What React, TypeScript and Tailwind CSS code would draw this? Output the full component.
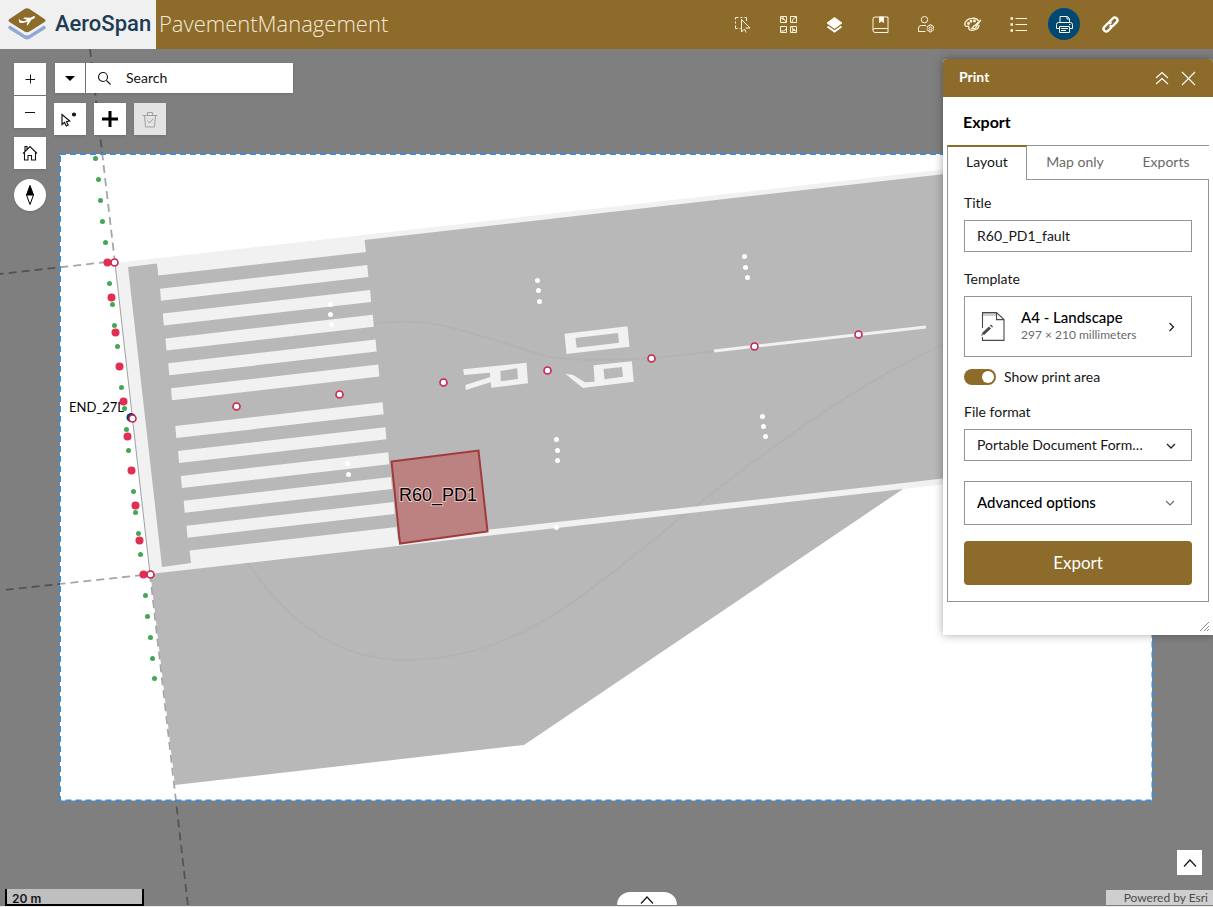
import React from "react";

const GREEN_LIGHTS = [
    [95, 158], [98, 179], [100, 200], [102, 221], [105, 242], [109, 283], [112, 304], [114, 325],
    [117, 346], [121, 387], [124, 408], [126, 429], [128, 450], [133, 491], [135, 512], [138, 533],
    [140, 554], [145, 595], [147, 616], [150, 637], [152, 658], [154, 678],
];

const RED_LIGHTS = [
    [107, 262], [111, 297], [115, 332], [119, 366], [123, 401], [127, 436], [131, 470], [135, 505],
    [139, 540], [143, 574],
];

const RING_LIGHTS = [
    [114, 262], [132, 418], [150, 574], [236, 406], [339, 394], [443, 382], [547, 370], [651, 358],
    [754, 346], [858, 334],
];

const WHITE_LIGHTS = [
    [537, 280], [538, 290], [539, 301], [744, 256], [745, 267], [747, 277], [762, 416], [763, 426],
    [765, 436], [556, 439], [557, 450], [557, 460], [556, 527], [330, 304], [330, 314], [331, 324],
    [347, 463], [348, 474],
];

// top left corner of every threshold stripe
const STRIPES = [
    [160, 288.7], [162.8, 313.6], [165.5, 338.4], [168.3, 363.3], [171, 388.3],
    [175.3, 426], [178.1, 451], [180.9, 475.9], [183.7, 500.7], [186.5, 525.7],
];

export default function App() {
    return (
        <div className="flex min-h-screen flex-col border-b border-[#ececec] bg-white font-[Lato,sans-serif] text-[#151515]">
            <TopBar />
            <main className="relative flex-1 overflow-hidden bg-[#7f7f7f]">
                <RunwayMap />
                <div className="absolute left-3.5 top-3.5 flex items-start gap-2">
                    <NavigationControls />
                    <SearchControls />
                </div>
                <PrintPanel />
                <div className="absolute bottom-0 left-[5px] h-[17px] w-[139px] border-2 border-t-0 border-black bg-[#bfbfbf] pl-[5px] font-[Inter,sans-serif] text-xs font-semibold leading-5">
                    20 m
                </div>
                <button
                    aria-label="Open attribute table"
                    className="absolute bottom-px left-1/2 ml-2.5 flex h-[13px] w-[60px] justify-center rounded-t-[14px] bg-white pt-1"
                >
                    <svg width="14" height="8" viewBox="0 0 14 8" fill="none" stroke="#151515" strokeWidth="1.2">
                        <path d="M1 7.500 7 1l6 6.500" />
                    </svg>
                </button>
                <button
                    aria-label="Expand"
                    className="absolute bottom-[31px] right-[11px] flex h-[25px] w-[25px] items-center justify-center bg-white"
                >
                    <svg width="14" height="8" viewBox="0 0 14 8" fill="none" stroke="#151515" strokeWidth="1.2">
                        <path d="M1 7.500 7 1l6 6.500" />
                    </svg>
                </button>
                <div className="absolute bottom-px right-0 bg-[#cfcfcf] pl-[18px] pr-[5px] text-xs leading-[15px] text-[#4c4c4c]">
                    Powered by <a href="#esri">Esri</a>
                </div>
            </main>
        </div>
    );
}

function TopBar() {
    return (
        <header className="flex h-[49px] items-center bg-[#8c6b2b]">
            <div className="flex h-full w-[156px] items-center gap-2 bg-[#f0f0f0] pb-0.5 pl-2">
                <svg width="38" height="32" viewBox="0 0 38 32" className="shrink-0">
                    <path
                        d="M2 17.500.8 18.500q-1.500 1.300.5 2.800L16.500 30.700q2.500 1.600 5 0L36.700 21.300q2-1.500.5-2.800L36 17.500 21.500 26.700q-2.500 1.500-5 0z"
                        fill="#8fa9d3"
                    />
                    <path
                        d="M16.500 1q2.500-1.500 5 0L36.500 11q2 1.500 0 3L21.500 23.500q-2.500 1.600-5 0L1.500 14q-2-1.500 0-3z"
                        fill="#8c6b2b"
                    />
                    <path
                        d="M27 8.500c-1.200-.5-3 .4-4.400 1.300l-6.300-.3-1.100.9 3.700 1.300-2.500 1.500-3.900-.6-1-1.400-.9.300.7 2-.4 1.100 1.400.2c2.900.6 5.300-.3 7.300-1.300l-1 4 1.200-.2 3.600-5.500c2-1 4.400-2.100 3.600-3.300z"
                        fill="#fff"
                    />
                </svg>
                <span className="pl-px font-[Roboto,sans-serif] text-[22px] font-medium text-[#1c3b55]">AeroSpan</span>
            </div>
            <h1 className="pb-0.5 pl-[3px] font-['Open_Sans',sans-serif] text-[22px] font-light text-[#f7e8d5]">
                PavementManagement
            </h1>
            <nav className="ml-auto flex gap-3.5 pb-px pr-[87px] text-[#fff3dc]">
                <ToolButton label="Select">
                    <path d="M12.500 5V1.500h-2m-2 0h-2m-2 0h-3v2m0 2v2m0 2v3h2m2 0h1" />
                    <path d="M7.500 3.500v12.500l3-3 1.700 3.500 M7.500 3.500l8.500 8.500h-4.500" />
                </ToolButton>
                <ToolButton label="Basemap gallery">
                    <path d="M.5.500h6v6h-6zM10.500.500h6v6h-6zM.5 10.500h6v6h-6zM10.500 10.500h6v6h-6zM1 2l3 1 2 3M3 1v3M12 6q0-3 4-5M1 15q4 1 5-2M12 11l1 3 3 1m-4 1 1-2 2-1" />
                </ToolButton>
                <ToolButton label="Layers">
                    <path d="M8.500 1.500 16 7l-7.500 5.500L1 7z" fill="#fff" />
                    <path d="m1.500 10.500 7 5 7-5" stroke="#fff" strokeWidth="2" />
                </ToolButton>
                <ToolButton label="Bookmarks">
                    <path d="M3 1h13v15.500H3q-2 0-2-2V3q0-2 2-2zM1 14q0-1.500 2-1.500h13" />
                    <path d="M7.500 1v5.500L9.500 5l2 1.500V1z" fill="#fff" />
                </ToolButton>
                <ToolButton label="User settings">
                    <circle cx="6.500" cy="3.700" r="3.200" />
                    <path d="M7.500 15.500h-7V12q0-2.500 3-2.500H8" />
                    <circle cx="12.500" cy="12.500" r="1.400" />
                    <path d="m11.700 8.800 1.600 0 .3 1.200 1.200-.3.900 1.400-.9.900.9 1.500-1 1.300-1.200-.2-.4 1.400h-1.500l-.4-1.300-1.200.2-.9-1.400.8-1-.8-1.200 1-1.500 1.200.3z" />
                </ToolButton>
                <ToolButton label="Styles">
                    <g strokeWidth="1.300">
                        <path d="M14.500 5C13.500 3 11 2 8 2.300 4 2.600.8 5 .8 8.200c0 1.900 1.500 2.300 2.700 2 1.500-.3 1.500.6 1.300 1.800-.2 1.800 1.700 2.500 4.200 2.200 3.500-.4 6-2.400 6.100-5.100" />
                        <path d="M16.800 4 11 9.500c-1.700-.2-1.500 2-3 2.700 2 .7 3.800.4 4.200-1.400z" />
                        <circle cx="4.500" cy="7.500" r=".8" />
                        <circle cx="7" cy="5.300" r=".8" />
                        <circle cx="10.500" cy="5" r=".8" />
                    </g>
                </ToolButton>
                <ToolButton label="Legend">
                    <path d="M5.500 2.500H17M5.500 8.500H17M5.500 14.500H17" />
                    <path d="M.5 2.500h2.500M.5 8.500h2.500M.5 14.500h2.500" strokeWidth="2.400" />
                </ToolButton>
                <ToolButton label="Print" active>
                    <path d="M4 6.500V.5h7.500l2 2v4M11 .5V3h2.500M3.500 12.500H.5V8.500q0-2 2-2h12q2 0 2 2v4h-3M3.500 10.500h10v6h-10zM5 12.500h7M5 14.500h5M13 8.500h1.500" />
                </ToolButton>
                <ToolButton label="Share link">
                    <g transform="rotate(-45 8.500 8.500)" stroke="#fff" strokeWidth="2.300">
                        <path d="M8 11.200H2.500Q-.2 11.200-.2 8.500T2.500 5.800h4.500q2.700 0 2.700 2.700M9 5.800h5.500q2.700 0 2.700 2.700t-2.700 2.700H10q-2.700 0-2.700-2.700" />
                    </g>
                </ToolButton>
            </nav>
        </header>
    );
}

function ToolButton({ label, active, children }: { label: string; active?: boolean; children: React.ReactNode }) {
    return (
        <button
            aria-label={label}
            className={`flex size-8 items-center justify-center rounded-full ${active ? "bg-[#004874]" : ""}`}
        >
            <svg
                className="overflow-visible"
                width="17"
                height="17"
                viewBox="0 0 17 17"
                fill="none"
                stroke="currentColor"
                strokeWidth="1"
            >
                {children}
            </svg>
        </button>
    );
}

function NavigationControls() {
    return (
        <div className="flex w-8 flex-col">
            <button aria-label="Zoom in" className="flex h-8 items-center justify-center bg-white shadow">
                <svg width="10" height="10" viewBox="0 0 10 10" stroke="#151515">
                    <path d="M5.500 .5v9M.5 5.500h10" />
                </svg>
            </button>
            <button aria-label="Zoom out" className="mt-px flex h-8 items-center justify-center bg-white shadow">
                <svg width="10" height="10" viewBox="0 0 10 10" stroke="#151515">
                    <path d="M0 5.500h10" />
                </svg>
            </button>
            <button aria-label="Default view" className="mt-[9px] flex h-8 items-center justify-center bg-white shadow">
                <svg width="16" height="16" viewBox="0 0 16 16" fill="none" stroke="#151515" strokeWidth="1.1">
                    <path d="M1 8.500 8 1.500l7 7M2.500 7.500v7.500H6v-4.500h3.500V15h4V7M3 6.500v-5h2v2.500" />
                </svg>
            </button>
            <button aria-label="Compass" className="mt-2.5 flex h-8 items-center justify-center rounded-full bg-white shadow">
                <svg width="10" height="20" viewBox="0 0 10 20" fill="none" stroke="#000" strokeWidth="1">
                    <path d="M5 .5 8.500 10h-7z" fill="#000" />
                    <path d="m1.500 10 3.500 9.500L8.500 10" />
                </svg>
            </button>
        </div>
    );
}

function SearchControls() {
    return (
        <div className="flex flex-col gap-2.5">
            <div className="ml-px flex h-[30px] gap-px">
                <button aria-label="Search sources" className="flex w-[30px] items-center justify-center bg-white shadow">
                    <svg width="10" height="5" viewBox="0 0 10 5">
                        <path d="M0 0h10L5 5z" />
                    </svg>
                </button>
                <label className="flex w-[207px] items-center gap-3.5 bg-white pl-[11px] shadow">
                    <svg width="15" height="15" viewBox="0 0 15 15" fill="none" stroke="#151515" strokeWidth="1.1">
                        <circle cx="6" cy="6" r="4.500" />
                        <path d="m9.500 9.500 4 4" />
                    </svg>
                    <input
                        aria-label="Search"
                        placeholder="Search"
                        className="w-0 flex-1 pb-0.5 text-[14px] outline-none placeholder:text-[#151515]"
                    />
                </label>
            </div>
            <div className="flex gap-2">
                <button aria-label="Select feature" className="flex size-8 items-center justify-center bg-white shadow">
                    <svg width="18" height="18" viewBox="0 0 18 18" fill="none" stroke="#151515" strokeWidth="1.2">
                        <path d="M1 4.500v10l2.500-2 1.800 3.500 1.900-1-1.700-3.300 3.200-.7z" />
                        <circle cx="13" cy="4.500" r="1.500" fill="#151515" />
                    </svg>
                </button>
                <button aria-label="Add" className="flex size-8 items-center justify-center bg-white shadow">
                    <svg width="16" height="16" viewBox="0 0 16 16" stroke="#000" strokeWidth="3">
                        <path d="M8 0v16M0 8h16" />
                    </svg>
                </button>
                <button aria-label="Clear" disabled className="flex size-8 items-center justify-center bg-[#e3e3e3] shadow">
                    <svg width="16" height="17" viewBox="0 0 16 17" fill="none" stroke="#a0a0a0">
                        <path d="M.5 4.500h15M5.500 4V1.500h5V4M2.500 4.500l1 11.500h9l1-11.500M5.500 9.500 7.500 12l3.500-4" />
                    </svg>
                </button>
            </div>
        </div>
    );
}

function RunwayMap() {
    return (
        <svg
            className="absolute inset-0 h-full w-full"
            viewBox="0 49 1213 857"
            preserveAspectRatio="xMinYMin slice"
            aria-label="Runway map"
        >
            <path d="M0 49h1213v857H0z" fill="#fff" />
            {/* Apron and runway */}
            <path d="m150 570 25 215 349-40 379-256 200-60z" fill="#b8b8b8" />
            <path
                d="M694 507C590 590 520 660 405 660 340 660 290 625 247 562"
                fill="none"
                stroke="#b3b3b3"
                strokeWidth="2"
            />
            <path d="m115 263 1098-124v315L150 574z" fill="#f1f1f1" />
            <path
                d="m128 267 29-3.500 1.300 12L366 252l-1.500-12L1213 143.500v304.500L398 540l-1.500-13L189.500 550.500l1.500 12.500-29 4z"
                fill="#b8b8b8"
            />
            <path
                d="M370 325q34-7 70 0c40 9 80 24 110 32q60 8 164-6M943 345C860 382 780 440 696 506"
                fill="none"
                stroke="#b3b3b3"
                strokeWidth="2"
            />
            {STRIPES.map(([x, y]) => (
                <path key={y} d={`M${x} ${y}l207.300-23.700 1 12L${x + 1} ${y + 12}z`} fill="#f1f1f1" />
            ))}
            {/* Runway designator */}
            <g fill="#f1f1f1" fillRule="evenodd">
                <path d="m564.500 333.700 63-7.400 2 20.400-63 7.300zm11 4.300 1.200 9.700 42.300-5-1-9.700z" />
                <path d="m593.500 365.300 38.300-4 2 20.400-51 6.300L565.500 374l7.200.7 12.300 7.600 9.600-.6zm10 3.700 1 10.300 18.500-2.600-1-9.700z" />
                <path d="m463.200 369.300 63.300-6.600 1.500 20.600-36.700 4.400-.7-5.400-24.800 7.700-.4-5 24.800-8-.2-4.300-26 2.300zm37.200 1.700.4 10.300 17.200-2.300-.8-10.700z" />
            </g>
            <path d="m714 351 212-24" stroke="#f1f1f1" strokeWidth="3" />

            {/* Survey lines */}
            <g stroke="#a6a6a6" strokeWidth="1.800" strokeDasharray="8 5">
                <path d="m90 49 25 214M150 574l38 332" />
                <path d="m107 262-107 12M143 575 4 590" />
            </g>
            <path d="m115 263 35 311" stroke="#a0a0a0" />

            {/* Selected slab */}
            <path d="m391.500 461.500 87-11 9 81-87.500 12z" fill="#bb8281" stroke="#a03a3c" strokeWidth="2" />
            <text
                x="399"
                y="501"
                fontSize="18"
                fontFamily="Liberation Sans, sans-serif"
                stroke="#e8c4c4"
                strokeWidth="2"
                paintOrder="stroke"
            >
                R60_PD1
            </text>

            {GREEN_LIGHTS.map(([x, y]) => (
                <circle key={y} cx={x + 0.5} cy={y + 0.5} r="2.500" fill="#43a856" />
            ))}
            {RED_LIGHTS.map(([x, y]) => (
                <circle key={y} cx={x + 0.5} cy={y + 0.5} r="4" fill="#e02f52" />
            ))}
            {WHITE_LIGHTS.map(([x, y]) => (
                <circle key={`${x}-${y}`} cx={x + 0.5} cy={y + 0.5} r="2.500" fill="#fff" />
            ))}
            <circle cx="131" cy="417.500" r="4.500" fill="#123a70" />
            {RING_LIGHTS.map(([x, y]) => (
                <circle key={x} cx={x + 0.5} cy={y + 0.5} r="3.500" fill="#fff" stroke="#c9234f" strokeWidth="1.600" />
            ))}
            <text x="69" y="412" fontSize="13" fontFamily="Lato, sans-serif">
                END_27L
            </text>

            {/* Everything outside the print area is dimmed */}
            <path d="M0 49h1213v857H0zM60 154v646.500h1092V154z" fill="#000" fillOpacity="0.500" fillRule="evenodd" />
            <path d="M60 154h1092.500V800.500H60z" fill="none" stroke="#3b8ede" strokeWidth="2" strokeDasharray="6 4" />
        </svg>
    );
}

function PrintPanel() {
    return (
        <section
            aria-label="Print"
            className="absolute right-0 top-2.5 w-[270px] rounded-t bg-white pb-[33px] text-[14px] shadow-[0_0_10px_rgba(0,0,0,0.35)]"
        >
            <header className="flex h-[38px] items-center rounded-t bg-[#8c6b2b] pl-4 pr-[17px] text-white">
                <h2 className="pb-1 text-[14px] font-bold">Print</h2>
                <button aria-label="Collapse" className="ml-auto">
                    <svg width="14" height="14" viewBox="0 0 14 14" fill="none" stroke="currentColor" strokeWidth="1.1">
                        <path d="m1 7 6-5.500L13 7M1 13l6-5.500 6 5.500" />
                    </svg>
                </button>
                <button aria-label="Close" className="ml-3">
                    <svg width="15" height="15" viewBox="0 0 15 15" fill="none" stroke="currentColor" strokeWidth="1.1">
                        <path d="m1 1 13 13M14 1 1 14" />
                    </svg>
                </button>
            </header>
            <div className="px-1">
                <h3 className="pl-4 pt-px text-[16px] font-bold leading-[47px] text-black">Export</h3>
                <div role="tablist" className="flex h-[35px]">
                    <button
                        role="tab"
                        aria-selected="true"
                        className="w-20 border-x border-t-2 border-x-[#959595] border-t-[#8c6b2b] pb-1"
                    >
                        Layout
                    </button>
                    <button role="tab" aria-selected="false" className="w-24 border-y border-[#959595] pb-0.5 text-[#6a6a6a]">
                        Map only
                    </button>
                    <button role="tab" aria-selected="false" className="flex-1 border-y border-[#959595] pb-0.5 text-[#6a6a6a]">
                        Exports
                    </button>
                </div>
                <form className="flex flex-col border border-t-0 border-[#959595] px-4 pb-4 pt-[13px]">
                    <label htmlFor="title" className="leading-5">
                        Title
                    </label>
                    <input
                        id="title"
                        defaultValue="R60_PD1_fault"
                        className="mt-[7px] h-8 border border-[#959595] px-3 pb-0.5 outline-none"
                    />
                    <span className="mt-[17px] leading-5">Template</span>
                    <button
                        type="button"
                        className="mt-[7px] flex h-[61px] items-center border border-[#959595] px-4 text-left"
                    >
                        <svg width="24" height="29" viewBox="0 0 24 29" fill="none" stroke="#4a4a4a" strokeWidth="1.1">
                            <path d="M1.500 4h14V1h-14z" fill="#d0d0d0" stroke="none" />
                            <path d="M1.500 16V.6h14l7.500 7V28.400H1.500V25M15.500.6v7H23" />
                            <path d="m2 22 7-6.500M10 14.500l1-1" strokeWidth="3" />
                            <path d="m.5 23.500 1.500-2" />
                        </svg>
                        <span className="ml-4 flex-1 pb-0.5">
                            <span className="block text-[15px] font-medium leading-[18px] text-black">A4 - Landscape</span>
                            <span className="block text-xs leading-[18px] text-[#6a6a6a]">297 × 210 millimeters</span>
                        </span>
                        <svg width="7" height="10" viewBox="0 0 7 10" fill="none" stroke="#222" strokeWidth="1.3">
                            <path d="m1.500 1 4 4-4 4" />
                        </svg>
                    </button>
                    <label className="mt-3 flex h-4 items-center gap-2">
                        <input
                            type="checkbox"
                            role="switch"
                            defaultChecked
                            className="flex h-4 w-8 appearance-none items-center justify-end rounded-full bg-[#8c6b2b] px-0.5 before:size-3 before:rounded-full before:bg-white"
                        />
                        <span className="pb-0.5">Show print area</span>
                    </label>
                    <label htmlFor="format" className="mt-[17px] leading-5">
                        File format
                    </label>
                    <div className="relative mt-[7px]">
                        <select
                            id="format"
                            className="block h-8 w-full appearance-none truncate border border-[#959595] bg-white pb-0.5 pl-3 pr-12"
                        >
                            <option>Portable Document Format (PDF)</option>
                        </select>
                        <svg
                            className="pointer-events-none absolute right-4 top-3"
                            width="10"
                            height="10"
                            viewBox="0 0 10 10"
                            fill="none"
                            stroke="#222"
                            strokeWidth="1.3"
                        >
                            <path d="m1 3 4 4 4-4" />
                        </svg>
                    </div>
                    <button
                        type="button"
                        className="mt-5 flex h-11 items-center justify-between border border-[#959595] pl-3 pr-4 text-[15px] font-medium text-black"
                    >
                        <span className="pb-0.5">Advanced options</span>
                        <svg width="10" height="10" viewBox="0 0 10 10" fill="none" stroke="#6a6a6a" strokeWidth="1.1">
                            <path d="m1 3 4 4 4-4" />
                        </svg>
                    </button>
                    <button type="button" className="mt-4 h-11 rounded-sm bg-[#8c6b2b] text-[17px] text-white">
                        Export
                    </button>
                </form>
            </div>
            <svg className="absolute bottom-1 right-1" width="9" height="9" viewBox="0 0 9 9" fill="none" stroke="#8a8a8a">
                <path d="M0 9 9 0M4 9l5-5M7 9l2-2" />
            </svg>
        </section>
    );
}
